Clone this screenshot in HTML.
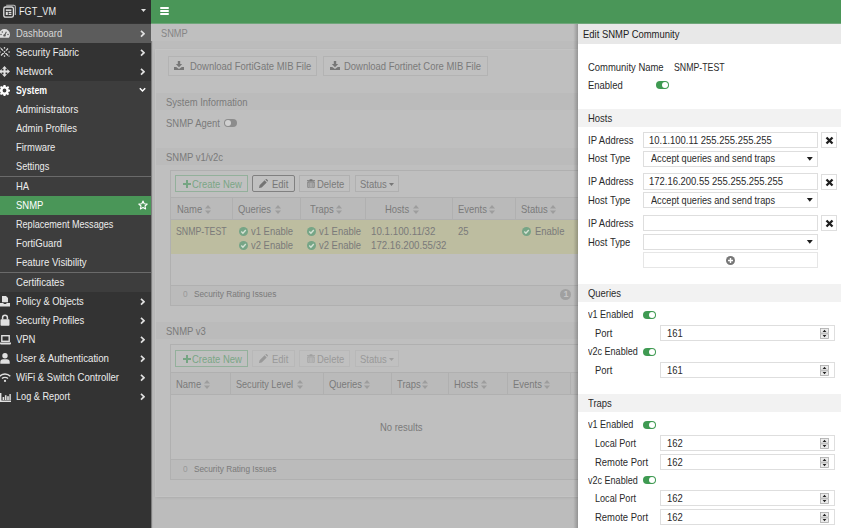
<!DOCTYPE html>
<html lang="en">
<head>
<meta charset="utf-8">
<title>FGT_VM - SNMP</title>
<style>
*{box-sizing:border-box;margin:0;padding:0}
html,body{width:841px;height:528px;overflow:hidden}
body{position:relative;background:#bcbcbc;font-family:"Liberation Sans",sans-serif;font-size:10.5px;color:#333}
.abs{position:absolute}
.t{position:absolute;white-space:nowrap;display:inline-block;transform-origin:0 50%;transform:scaleX(var(--s,.9));line-height:14px;height:14px;margin-top:-.5px}
/* sidebar */
#side{position:absolute;left:0;top:0;width:151px;height:528px;background:#333}
#side .hd{position:absolute;left:0;top:0;width:151px;height:23px;background:#2e2e2e}
#side .row{position:absolute;left:0;width:151px;height:19px;color:#ececec}
#side .row .t{left:16px;top:2.9px}
#side .row.up .t{top:2.7px}
#side .sub{background:#3d3d3d}
#side .sel{background:#4a9658;color:#fff}
#side .hov{background:#5c5c5c;color:#d6d6d6}
#side .sep{position:absolute;left:0;width:151px;height:1px;background:#6a6a6a}
#side svg{position:absolute}
/* top */
#top{position:absolute;left:151px;top:0;width:690px;height:24px;background:#4a9658;border-bottom:1px solid #6fa67a}
/* main dim */
#main{position:absolute;left:0;top:0;width:0;height:0;color:#7a7a7a}
#main .btn{position:absolute;border:1px solid #b3b3b3;background:#c0c0c0}
#main .sec{position:absolute;left:156px;width:430px;height:17px;background:#bbbbbb}
#main .tbl{position:absolute;border:1px solid #b0b0b0;background:#bfbfbf}
#main .tb{position:absolute;height:17px;border:1px solid #b0b0b0;background:#c0c0c0}
#main .tb.g{border-color:#93b09b}
#main .tb.d{border:1.5px solid #808080;border-radius:2px}
#main .tb.dis{border-color:#b8b8b8}
#main .t.g{color:#7ba686}
#main .t.s{font-size:9.2px}
#main .th{position:absolute;background:#bababa;border-top:1px solid #b0b0b0;border-bottom:1px solid #b0b0b0}
#main .vs{position:absolute;width:1px;background:#b0b0b0}
#main .ft{position:absolute;height:20px;background:#bbbbbb;border-top:1px solid #b0b0b0}

#panel{position:absolute;left:0;top:0;width:0;height:0;color:#2a2a2a}
#panel .ph{position:absolute;left:578px;width:263px;height:18px;background:#f2f2f2}
#panel .in{position:absolute;height:16px;border:1px solid #dedede;background:#fff}
#panel .tg{position:absolute;width:13px;height:8px;border-radius:4px;background:#3f9a52}
#panel .tg i{position:absolute;left:6px;top:1px;width:6px;height:6px;border-radius:3px;background:#fff}
#panel .xb{position:absolute;left:821px;width:16px;height:16px;border:1px solid #dedede;background:#fff}
#panel .sp{position:absolute;left:820px;width:9px;height:11px}
#panel .sp svg{display:block}
</style>
</head>
<body>
<div id="top">
  <div class="abs" style="left:9px;top:7px;width:9px;height:1.5px;background:#fff;border-radius:1px"></div>
  <div class="abs" style="left:9px;top:10px;width:9px;height:1.5px;background:#fff;border-radius:1px"></div>
  <div class="abs" style="left:9px;top:13.2px;width:9px;height:1.5px;background:#fff;border-radius:1px"></div>
</div>
<div id="side">
  <div class="hd"><span class="t" style="left:18.5px;top:4px;color:#eee;--s:.87">FGT_VM</span></div><svg style="left:2.5px;top:3.5px" width="13" height="14" viewBox="0 0 13 14"><path d="M3.2 1.2H10.8A1.5 1.5 0 0 1 12.3 2.7V11" fill="none" stroke="#bbb" stroke-width="1.1"/><rect x=".8" y="3" width="9.6" height="10.2" rx="1.8" fill="none" stroke="#e0e0e0" stroke-width="1.3"/><rect x="2.8" y="5.4" width="5.6" height="1.5" fill="#e0e0e0"/><rect x="2.8" y="7.8" width="2" height="3.2" fill="#e0e0e0"/><rect x="5.6" y="7.8" width="2.8" height="1.3" fill="#e0e0e0"/><rect x="5.6" y="9.7" width="2.8" height="1.3" fill="#e0e0e0"/></svg><svg style="left:141px;top:9px" width="5" height="3" viewBox="0 0 5 3"><path d="M0 0H5L2.5 3Z" fill="#e0e0e0"/></svg>
  <div class="row hov up" style="top:24px"><span class="t">Dashboard</span></div><svg style="left:-1px;top:29px" width="11" height="9" viewBox="0 0 11 9"><path d="M1.1 8.8A5.5 5.5 0 1 1 9.9 8.8Z" fill="#e0e0e0"/><path d="M5.5 6.6L7.4 2.8" stroke="#5c5c5c" stroke-width="1.1"/><circle cx="5.5" cy="6.4" r="1.2" fill="#5c5c5c"/><circle cx="2" cy="5.6" r=".75" fill="#5c5c5c"/><circle cx="3.3" cy="2.9" r=".75" fill="#5c5c5c"/><circle cx="9" cy="5.6" r=".75" fill="#5c5c5c"/></svg><svg style="left:140px;top:30px" width="5" height="8" viewBox="0 0 5 8"><path d="M1 .8L4 3.7L1 6.6" fill="none" stroke="#e0e0e0" stroke-width="1.7"/></svg>
  <div class="row up" style="top:43px"><span class="t">Security Fabric</span></div><svg style="left:-1px;top:47px" width="11" height="10" viewBox="0 0 11 10"><path d="M2 1.5L9 8.5M9 1.5L2 8.5" stroke="#e0e0e0" stroke-width="1.2" stroke-dasharray="3 1 10"/><circle cx="5.5" cy=".9" r=".8" fill="#e0e0e0"/><circle cx="5.5" cy="9.1" r=".8" fill="#e0e0e0"/><circle cx=".9" cy="5" r=".8" fill="#e0e0e0"/><circle cx="10.1" cy="5" r=".8" fill="#e0e0e0"/><circle cx="1" cy=".9" r=".7" fill="#e0e0e0"/><circle cx="10" cy="9.1" r=".7" fill="#e0e0e0"/></svg><svg style="left:140px;top:49px" width="5" height="8" viewBox="0 0 5 8"><path d="M1 .8L4 3.7L1 6.6" fill="none" stroke="#e0e0e0" stroke-width="1.7"/></svg>
  <div class="row" style="top:62px"><span class="t" style="--s:0.952">Network</span></div><svg style="left:-1px;top:66px" width="11" height="11" viewBox="0 0 11 11"><path d="M5.5 0L8 2.7H6.5V4.5H8.3V3L11 5.5L8.3 8V6.5H6.5V8.3H8L5.5 11L3 8.3H4.5V6.5H2.7V8L0 5.5L2.7 3V4.5H4.5V2.7H3Z" fill="#e0e0e0"/></svg><svg style="left:140px;top:68px" width="5" height="8" viewBox="0 0 5 8"><path d="M1 .8L4 3.7L1 6.6" fill="none" stroke="#e0e0e0" stroke-width="1.7"/></svg>
  <div class="row sub" style="top:81px;color:#fff;font-weight:bold"><span class="t" style="--s:0.83">System</span></div><svg style="left:-1px;top:85px" width="11" height="11" viewBox="0 0 11 11"><path fill="#fff" fill-rule="evenodd" d="M4.5 0H6.5L6.8 1.5L7.8 1.9L9 1L10.2 2.3L9.3 3.5L9.7 4.5L11 4.7V6.5L9.6 6.8L9.2 7.7L10.1 9L8.8 10.2L7.6 9.3L6.7 9.7L6.4 11H4.6L4.3 9.7L3.3 9.3L2.1 10.1L.9 8.8L1.7 7.7L1.3 6.7L0 6.4V4.6L1.4 4.3L1.8 3.3L.9 2.1L2.2 .9L3.4 1.7L4.3 1.3ZM5.5 3.6A1.9 1.9 0 1 0 5.5 7.4A1.9 1.9 0 1 0 5.5 3.6Z"/></svg><svg style="left:139px;top:87px" width="7" height="6" viewBox="0 0 7 6"><path d="M.8 1.2L3.5 4L6.2 1.2" fill="none" stroke="#fff" stroke-width="1.5"/></svg>
  <div class="row sub" style="top:100px"><span class="t" style="--s:0.928">Administrators</span></div>
  <div class="row sub" style="top:119px"><span class="t">Admin Profiles</span></div>
  <div class="row sub" style="top:138px"><span class="t">Firmware</span></div>
  <div class="row sub" style="top:157px"><span class="t" style="--s:0.876">Settings</span></div>
  <div class="sep" style="top:176px"></div>
  <div class="row sub" style="top:177px"><span class="t">HA</span></div>
  <div class="row sel" style="top:196px"><span class="t">SNMP</span></div><svg style="left:138px;top:200px" width="10" height="10" viewBox="0 0 10 10"><path d="M5 1L6.2 3.7L9.2 4L7 6L7.6 8.9L5 7.4L2.4 8.9L3 6L.8 4L3.8 3.7Z" fill="none" stroke="#fff" stroke-width="1.1" stroke-linejoin="round"/></svg>
  <div class="row sub" style="top:215px"><span class="t" style="--s:0.864">Replacement Messages</span></div>
  <div class="row sub" style="top:234px"><span class="t" style="--s:0.916">FortiGuard</span></div>
  <div class="row sub" style="top:253px"><span class="t" style="--s:0.92">Feature Visibility</span></div>
  <div class="sep" style="top:272px"></div>
  <div class="row sub" style="top:273px"><span class="t" style="--s:0.919">Certificates</span></div>
  <div class="row" style="top:292px"><span class="t" style="--s:0.886">Policy &amp; Objects</span></div><svg style="left:0px;top:296px" width="10" height="11" viewBox="0 0 10 11"><path d="M2 0H6L8 2V6.2H2Z" fill="#e0e0e0"/><path d="M0 7H3.2L4 8H6L6.8 7H10V10.5H0Z" fill="#e0e0e0"/></svg><svg style="left:140px;top:298px" width="5" height="8" viewBox="0 0 5 8"><path d="M1 .8L4 3.7L1 6.6" fill="none" stroke="#e0e0e0" stroke-width="1.7"/></svg>
  <div class="row" style="top:311px"><span class="t">Security Profiles</span></div><svg style="left:0px;top:314px" width="10" height="12" viewBox="0 0 10 12"><path d="M2.6 5.5V3.6A2.4 2.4 0 0 1 7.4 3.6V5.5" fill="none" stroke="#e0e0e0" stroke-width="1.5"/><rect x=".5" y="5.2" width="9" height="6.5" rx=".8" fill="#e0e0e0"/></svg><svg style="left:140px;top:317px" width="5" height="8" viewBox="0 0 5 8"><path d="M1 .8L4 3.7L1 6.6" fill="none" stroke="#e0e0e0" stroke-width="1.7"/></svg>
  <div class="row" style="top:330px"><span class="t">VPN</span></div><svg style="left:0px;top:335px" width="11" height="10" viewBox="0 0 11 10"><rect x="1.8" y=".7" width="7.4" height="5.6" fill="none" stroke="#e0e0e0" stroke-width="1.4"/><path d="M0 7.6H11V8.4Q11 9.4 10 9.4H1Q0 9.4 0 8.4Z" fill="#e0e0e0"/></svg><svg style="left:140px;top:336px" width="5" height="8" viewBox="0 0 5 8"><path d="M1 .8L4 3.7L1 6.6" fill="none" stroke="#e0e0e0" stroke-width="1.7"/></svg>
  <div class="row" style="top:349px"><span class="t" style="--s:0.921">User &amp; Authentication</span></div><svg style="left:0px;top:353px" width="10" height="11" viewBox="0 0 10 11"><circle cx="5" cy="2.8" r="2.7" fill="#e0e0e0"/><path d="M.3 10.8V9A2.8 2.8 0 0 1 3.1 6.3H6.9A2.8 2.8 0 0 1 9.7 9V10.8Z" fill="#e0e0e0"/></svg><svg style="left:140px;top:355px" width="5" height="8" viewBox="0 0 5 8"><path d="M1 .8L4 3.7L1 6.6" fill="none" stroke="#e0e0e0" stroke-width="1.7"/></svg>
  <div class="row" style="top:368px"><span class="t" style="--s:0.91">WiFi &amp; Switch Controller</span></div><svg style="left:-1px;top:373px" width="12" height="9" viewBox="0 0 12 9"><path d="M.7 3.3A7.2 7.2 0 0 1 11.3 3.3" fill="none" stroke="#e0e0e0" stroke-width="1.4"/><path d="M3 5.6A4.2 4.2 0 0 1 9 5.6" fill="none" stroke="#e0e0e0" stroke-width="1.4"/><circle cx="6" cy="7.9" r="1.1" fill="#e0e0e0"/></svg><svg style="left:140px;top:374px" width="5" height="8" viewBox="0 0 5 8"><path d="M1 .8L4 3.7L1 6.6" fill="none" stroke="#e0e0e0" stroke-width="1.7"/></svg>
  <div class="row" style="top:387px"><span class="t" style="--s:0.873">Log &amp; Report</span></div><svg style="left:0px;top:393px" width="11" height="9" viewBox="0 0 11 9"><path d="M.7 0V8.3H11" fill="none" stroke="#e0e0e0" stroke-width="1.4"/><rect x="2.6" y="4" width="1.6" height="3" fill="#e0e0e0"/><rect x="4.9" y="2.2" width="1.6" height="4.8" fill="#e0e0e0"/><rect x="7.2" y="3.2" width="1.6" height="3.8" fill="#e0e0e0"/><rect x="9.4" y="1" width="1.4" height="6" fill="#e0e0e0"/></svg><svg style="left:140px;top:393px" width="5" height="8" viewBox="0 0 5 8"><path d="M1 .8L4 3.7L1 6.6" fill="none" stroke="#e0e0e0" stroke-width="1.7"/></svg>
</div>

<div id="main">
  <div class="abs" style="left:151px;top:24px;width:1px;height:504px;background:#7d7d7d"></div><div class="abs" style="left:152px;top:24px;width:1px;height:504px;background:#b2b2b2"></div>
  <!-- page title bar -->
  <div class="abs" style="left:151px;top:24px;width:427px;height:17px;background:#bfbfbf"></div>
  <span class="t" style="left:161px;top:26px;color:#858585;--s:.88">SNMP</span>
  <!-- card -->
  <div class="abs" style="left:156px;top:50px;width:430px;height:446px;background:#bfbfbf;box-shadow:0 0 0 1px #c3c3c3,0 1px 3px rgba(0,0,0,.15)"></div>
  <!-- download buttons -->
  <div class="btn" style="left:168px;top:56px;width:149px;height:20px"></div>
  <span class="t" style="left:190px;top:59px">Download FortiGate MIB File</span>
  <div class="btn" style="left:323px;top:56px;width:165px;height:20px"></div>
  <span class="t" style="left:344px;top:59px">Download Fortinet Core MIB File</span>
  <!-- System Information -->
  <div class="sec" style="top:93px"></div>
  <span class="t" style="left:166px;top:95px">System Information</span>
  <span class="t" style="left:166px;top:116px">SNMP Agent</span>
  <div class="abs" style="left:224px;top:119px;width:13px;height:8px;border-radius:4px;background:#8c8c8c"></div>
  <div class="abs" style="left:225px;top:120px;width:6px;height:6px;border-radius:3px;background:#d0d0d0"></div>
  <!-- SNMP v1/v2c -->
  <div class="sec" style="top:148px"></div>
  <span class="t" style="left:166px;top:150px">SNMP v1/v2c</span>
  <div class="tbl" style="left:170px;top:170px;width:420px;height:136px"></div>
  <div class="tb g" style="left:175px;top:175px;width:73px"></div><span class="t g" style="left:192px;top:177px">Create New</span>
  <div class="tb d" style="left:252px;top:175px;width:43px"></div><span class="t" style="left:272px;top:177px;color:#777">Edit</span>
  <div class="tb" style="left:299px;top:175px;width:51px"></div><span class="t" style="left:317px;top:177px">Delete</span>
  <div class="tb" style="left:355px;top:175px;width:44px"></div><span class="t" style="left:360px;top:177px">Status</span>
  <div class="th" style="left:171px;top:197px;width:420px;height:23px"></div>
  <div class="vs" style="left:232px;top:197px;height:57px"></div>
  <div class="vs" style="left:300px;top:197px;height:57px"></div>
  <div class="vs" style="left:365px;top:197px;height:57px"></div>
  <div class="vs" style="left:452px;top:197px;height:57px"></div>
  <div class="vs" style="left:515px;top:197px;height:57px"></div>
  <div class="abs" style="left:171px;top:220px;width:420px;height:34px;background:#bdbda0"></div>
  <span class="t" style="left:177px;top:202px">Name</span>
  <span class="t" style="left:238px;top:202px">Queries</span>
  <span class="t" style="left:310px;top:202px">Traps</span>
  <span class="t" style="left:385px;top:202px">Hosts</span>
  <span class="t" style="left:458px;top:202px">Events</span>
  <span class="t" style="left:521px;top:202px">Status</span>
  <span class="t" style="left:176px;top:224px;--s:0.835">SNMP-TEST</span>
  <span class="t" style="left:251px;top:224px">v1 Enable</span>
  <span class="t" style="left:251px;top:238px">v2 Enable</span>
  <span class="t" style="left:319px;top:224px">v1 Enable</span>
  <span class="t" style="left:319px;top:238px">v2 Enable</span>
  <span class="t" style="left:371px;top:224px;--s:0.93">10.1.100.11/32</span>
  <span class="t" style="left:371px;top:238px;--s:0.923">172.16.200.55/32</span>
  <span class="t" style="left:458px;top:224px">25</span>
  <span class="t" style="left:535px;top:224px">Enable</span>
  <div class="ft" style="left:171px;top:285px;width:420px"></div>
  <span class="t s" style="left:183px;top:287px;color:#999">0</span>
  <span class="t s" style="left:194px;top:287px">Security Rating Issues</span>
  <!-- SNMP v3 -->
  <div class="sec" style="top:322px"></div>
  <span class="t" style="left:166px;top:324px">SNMP v3</span>
  <div class="tbl" style="left:170px;top:344px;width:420px;height:136px"></div>
  <div class="tb g" style="left:175px;top:350px;width:73px"></div><span class="t g" style="left:192px;top:352px">Create New</span>
  <div class="tb dis" style="left:252px;top:350px;width:43px"></div><span class="t" style="left:272px;top:352px;color:#999">Edit</span>
  <div class="tb dis" style="left:299px;top:350px;width:51px"></div><span class="t" style="left:317px;top:352px;color:#999">Delete</span>
  <div class="tb dis" style="left:355px;top:350px;width:44px"></div><span class="t" style="left:360px;top:352px;color:#999">Status</span>
  <div class="th" style="left:171px;top:372px;width:420px;height:23px"></div>
  <div class="vs" style="left:230px;top:372px;height:23px"></div>
  <div class="vs" style="left:323px;top:372px;height:23px"></div>
  <div class="vs" style="left:391px;top:372px;height:23px"></div>
  <div class="vs" style="left:448px;top:372px;height:23px"></div>
  <div class="vs" style="left:507px;top:372px;height:23px"></div>
  <div class="vs" style="left:570px;top:372px;height:23px"></div>
  <span class="t" style="left:176px;top:377px">Name</span>
  <span class="t" style="left:236px;top:377px;--s:0.865">Security Level</span>
  <span class="t" style="left:329px;top:377px">Queries</span>
  <span class="t" style="left:397px;top:377px">Traps</span>
  <span class="t" style="left:454px;top:377px">Hosts</span>
  <span class="t" style="left:513px;top:377px">Events</span>
  <span class="t" style="left:380px;top:420px">No results</span>
  <div class="ft" style="left:171px;top:459px;width:420px"></div>
  <span class="t s" style="left:183px;top:462px;color:#999">0</span>
  <span class="t s" style="left:194px;top:462px">Security Rating Issues</span>
  <!-- icons -->
  <svg class="abs" style="left:174px;top:61px" width="10" height="9" viewBox="0 0 10 9"><path d="M3.8 0H6.2V3H8.2L5 6.2L1.8 3H3.8Z" fill="#777"/><path d="M0 6H2.2L5 8L7.8 6H10V9H0Z" fill="#777"/></svg><svg class="abs" style="left:330px;top:61px" width="10" height="9" viewBox="0 0 10 9"><path d="M3.8 0H6.2V3H8.2L5 6.2L1.8 3H3.8Z" fill="#777"/><path d="M0 6H2.2L5 8L7.8 6H10V9H0Z" fill="#777"/></svg><svg class="abs" style="left:183px;top:180px" width="8" height="8" viewBox="0 0 8 8"><path d="M4 0V8M0 4H8" stroke="#76a583" stroke-width="2"/></svg><svg class="abs" style="left:259px;top:179px" width="9" height="9" viewBox="0 0 9 9"><path d="M0 9L.6 6.3L5.6 1.3L7.7 3.4L2.7 8.4Z M6.3 .6L7 0Q7.4 -.2 7.8 .2L8.8 1.2Q9.2 1.6 8.8 2L8.4 2.7Z" fill="#737373"/></svg><svg class="abs" style="left:307px;top:179px" width="8" height="9" viewBox="0 0 8 9"><path d="M0 1.2H2.6V.3H5.4V1.2H8V2.2H0Z" fill="#777"/><path d="M.9 3H7.1V8.2Q7.1 9 6.3 9H1.7Q.9 9 .9 8.2Z" fill="none" stroke="#777" stroke-width="1"/><path d="M2.9 3.8V8M5.1 3.8V8" stroke="#777" stroke-width=".8"/></svg><svg class="abs" style="left:389px;top:183px" width="5" height="3" viewBox="0 0 5 3"><path d="M0 0H5L2.5 3Z" fill="#777"/></svg><svg class="abs" style="left:183px;top:355px" width="8" height="8" viewBox="0 0 8 8"><path d="M4 0V8M0 4H8" stroke="#76a583" stroke-width="2"/></svg><svg class="abs" style="left:259px;top:354px" width="9" height="9" viewBox="0 0 9 9"><path d="M0 9L.6 6.3L5.6 1.3L7.7 3.4L2.7 8.4Z M6.3 .6L7 0Q7.4 -.2 7.8 .2L8.8 1.2Q9.2 1.6 8.8 2L8.4 2.7Z" fill="#999"/></svg><svg class="abs" style="left:307px;top:354px" width="8" height="9" viewBox="0 0 8 9"><path d="M0 1.2H2.6V.3H5.4V1.2H8V2.2H0Z" fill="#a0a0a0"/><path d="M.9 3H7.1V8.2Q7.1 9 6.3 9H1.7Q.9 9 .9 8.2Z" fill="none" stroke="#a0a0a0" stroke-width="1"/><path d="M2.9 3.8V8M5.1 3.8V8" stroke="#a0a0a0" stroke-width=".8"/></svg><svg class="abs" style="left:389px;top:358px" width="5" height="3" viewBox="0 0 5 3"><path d="M0 0H5L2.5 3Z" fill="#a0a0a0"/></svg><svg class="abs" style="left:205px;top:205px" width="6" height="9" viewBox="0 0 6 9"><path d="M0 3.6L3 0L6 3.6Z M0 5.4L3 9L6 5.4Z" fill="#9d9d9d"/></svg><svg class="abs" style="left:274.5px;top:205px" width="6" height="9" viewBox="0 0 6 9"><path d="M0 3.6L3 0L6 3.6Z M0 5.4L3 9L6 5.4Z" fill="#9d9d9d"/></svg><svg class="abs" style="left:336px;top:205px" width="6" height="9" viewBox="0 0 6 9"><path d="M0 3.6L3 0L6 3.6Z M0 5.4L3 9L6 5.4Z" fill="#9d9d9d"/></svg><svg class="abs" style="left:412.5px;top:205px" width="6" height="9" viewBox="0 0 6 9"><path d="M0 3.6L3 0L6 3.6Z M0 5.4L3 9L6 5.4Z" fill="#9d9d9d"/></svg><svg class="abs" style="left:489px;top:205px" width="6" height="9" viewBox="0 0 6 9"><path d="M0 3.6L3 0L6 3.6Z M0 5.4L3 9L6 5.4Z" fill="#9d9d9d"/></svg><svg class="abs" style="left:550px;top:205px" width="6" height="9" viewBox="0 0 6 9"><path d="M0 3.6L3 0L6 3.6Z M0 5.4L3 9L6 5.4Z" fill="#9d9d9d"/></svg><svg class="abs" style="left:204px;top:380px" width="6" height="9" viewBox="0 0 6 9"><path d="M0 3.6L3 0L6 3.6Z M0 5.4L3 9L6 5.4Z" fill="#9d9d9d"/></svg><svg class="abs" style="left:296.5px;top:380px" width="6" height="9" viewBox="0 0 6 9"><path d="M0 3.6L3 0L6 3.6Z M0 5.4L3 9L6 5.4Z" fill="#9d9d9d"/></svg><svg class="abs" style="left:364px;top:380px" width="6" height="9" viewBox="0 0 6 9"><path d="M0 3.6L3 0L6 3.6Z M0 5.4L3 9L6 5.4Z" fill="#9d9d9d"/></svg><svg class="abs" style="left:421.5px;top:380px" width="6" height="9" viewBox="0 0 6 9"><path d="M0 3.6L3 0L6 3.6Z M0 5.4L3 9L6 5.4Z" fill="#9d9d9d"/></svg><svg class="abs" style="left:481px;top:380px" width="6" height="9" viewBox="0 0 6 9"><path d="M0 3.6L3 0L6 3.6Z M0 5.4L3 9L6 5.4Z" fill="#9d9d9d"/></svg><svg class="abs" style="left:544px;top:380px" width="6" height="9" viewBox="0 0 6 9"><path d="M0 3.6L3 0L6 3.6Z M0 5.4L3 9L6 5.4Z" fill="#9d9d9d"/></svg><svg class="abs" style="left:239px;top:227px" width="9" height="9" viewBox="0 0 9 9"><circle cx="4.5" cy="4.5" r="4.5" fill="#76a586"/><path d="M2.3 4.6L3.9 6.2L6.8 3.1" fill="none" stroke="#d5e3d5" stroke-width="1.4"/></svg><svg class="abs" style="left:239px;top:241px" width="9" height="9" viewBox="0 0 9 9"><circle cx="4.5" cy="4.5" r="4.5" fill="#76a586"/><path d="M2.3 4.6L3.9 6.2L6.8 3.1" fill="none" stroke="#d5e3d5" stroke-width="1.4"/></svg><svg class="abs" style="left:307px;top:227px" width="9" height="9" viewBox="0 0 9 9"><circle cx="4.5" cy="4.5" r="4.5" fill="#76a586"/><path d="M2.3 4.6L3.9 6.2L6.8 3.1" fill="none" stroke="#d5e3d5" stroke-width="1.4"/></svg><svg class="abs" style="left:307px;top:241px" width="9" height="9" viewBox="0 0 9 9"><circle cx="4.5" cy="4.5" r="4.5" fill="#76a586"/><path d="M2.3 4.6L3.9 6.2L6.8 3.1" fill="none" stroke="#d5e3d5" stroke-width="1.4"/></svg><svg class="abs" style="left:522px;top:227px" width="9" height="9" viewBox="0 0 9 9"><circle cx="4.5" cy="4.5" r="4.5" fill="#76a586"/><path d="M2.3 4.6L3.9 6.2L6.8 3.1" fill="none" stroke="#d5e3d5" stroke-width="1.4"/></svg><div class="abs" style="left:560px;top:289px;width:11px;height:11px;border-radius:6px;background:#a0a0a0"></div><span class="t" style="left:563.5px;top:287.5px;color:#c4c4c4;font-weight:bold;font-size:9px;transform:none">1</span>
</div>

<div class="abs" style="left:570px;top:24px;width:8px;height:504px;background:linear-gradient(to right,rgba(0,0,0,0) 40%,rgba(0,0,0,.22))"></div>
<div id="panel">
<div class="abs" style="left:578px;top:24px;width:263px;height:504px;background:#fff"></div>
<div class="abs" style="left:578px;top:24px;width:263px;height:20px;background:#e8e8e8"></div>
<span class="t" style="left:583px;top:27px;color:#222">Edit SNMP Community</span>
<span class="t" style="left:588px;top:60px">Community Name</span>
<span class="t" style="left:674px;top:60px;--s:0.835">SNMP-TEST</span>
<span class="t" style="left:588px;top:78px">Enabled</span>
<div class="tg" style="left:656px;top:81px"><i></i></div>
<div class="ph" style="top:109px"></div><span class="t" style="left:588px;top:111px">Hosts</span>
<span class="t" style="left:588px;top:133px">IP Address</span>
<div class="in" style="left:643px;top:132px;width:175px"></div>
<span class="t" style="left:649px;top:133px">10.1.100.11 255.255.255.255</span>
<div class="xb" style="top:132px"><svg width="9" height="9" viewBox="0 0 9 9" style="position:absolute;left:3px;top:3px"><path d="M1.5 1.5L7.5 7.5M7.5 1.5L1.5 7.5" stroke="#1e1e1e" stroke-width="2.3"/></svg></div>
<span class="t" style="left:588px;top:151.5px">Host Type</span>
<div class="in" style="left:643px;top:151px;width:175px"></div>
<span class="t" style="left:651px;top:151.5px;--s:0.874">Accept queries and send traps</span>
<svg class="abs" style="left:806px;top:157px" width="7" height="4" viewBox="0 0 7 4"><path d="M.8 0H6.8L3.8 3.8Z" fill="#1e1e1e"/></svg>
<span class="t" style="left:588px;top:174.5px">IP Address</span>
<div class="in" style="left:643px;top:173px;width:175px;height:17px"></div>
<span class="t" style="left:649px;top:174.5px">172.16.200.55 255.255.255.255</span>
<div class="xb" style="top:174px"><svg width="9" height="9" viewBox="0 0 9 9" style="position:absolute;left:3px;top:3px"><path d="M1.5 1.5L7.5 7.5M7.5 1.5L1.5 7.5" stroke="#1e1e1e" stroke-width="2.3"/></svg></div>
<span class="t" style="left:588px;top:193px">Host Type</span>
<div class="in" style="left:643px;top:192px;width:175px"></div>
<span class="t" style="left:651px;top:193px;--s:0.874">Accept queries and send traps</span>
<svg class="abs" style="left:806px;top:198px" width="7" height="4" viewBox="0 0 7 4"><path d="M.8 0H6.8L3.8 3.8Z" fill="#1e1e1e"/></svg>
<span class="t" style="left:588px;top:216px">IP Address</span>
<div class="in" style="left:643px;top:215px;width:175px"></div>
<div class="xb" style="top:215px"><svg width="9" height="9" viewBox="0 0 9 9" style="position:absolute;left:3px;top:3px"><path d="M1.5 1.5L7.5 7.5M7.5 1.5L1.5 7.5" stroke="#1e1e1e" stroke-width="2.3"/></svg></div>
<span class="t" style="left:588px;top:235px">Host Type</span>
<div class="in" style="left:643px;top:234px;width:175px"></div>
<svg class="abs" style="left:806px;top:240px" width="7" height="4" viewBox="0 0 7 4"><path d="M.8 0H6.8L3.8 3.8Z" fill="#1e1e1e"/></svg>
<div class="in" style="left:643px;top:252px;width:175px;border-color:#e6e6e6"></div>
<svg class="abs" style="left:726px;top:256px" width="9" height="9" viewBox="0 0 9 9"><circle cx="4.5" cy="4.5" r="4.5" fill="#777"/><path d="M4.5 2V7M2 4.5H7" stroke="#fff" stroke-width="1.4"/></svg>
<div class="ph" style="top:284px"></div><span class="t" style="left:588px;top:286px">Queries</span>
<span class="t" style="left:588px;top:307px;--s:0.862">v1 Enabled</span><div class="tg" style="left:643px;top:311px"><i></i></div>
<span class="t" style="left:595px;top:326px">Port</span><div class="in" style="left:660px;top:325px;width:175px"></div><span class="t" style="left:667px;top:326.5px">161</span><div class="sp" style="top:328px"><svg width="9" height="11" viewBox="0 0 9 11"><rect x=".5" y=".5" width="8" height="4.6" fill="#ececec" stroke="#aaa" stroke-width=".8"/><rect x=".5" y="5.9" width="8" height="4.6" fill="#ececec" stroke="#aaa" stroke-width=".8"/><path d="M2.6 3.9L4.5 1.7L6.4 3.9Z M2.6 7.1L4.5 9.3L6.4 7.1Z" fill="#222"/></svg></div>
<span class="t" style="left:588px;top:344px;--s:0.86">v2c Enabled</span><div class="tg" style="left:643px;top:348px"><i></i></div>
<span class="t" style="left:595px;top:363px">Port</span><div class="in" style="left:660px;top:362px;width:175px"></div><span class="t" style="left:667px;top:363.5px">161</span><div class="sp" style="top:365px"><svg width="9" height="11" viewBox="0 0 9 11"><rect x=".5" y=".5" width="8" height="4.6" fill="#ececec" stroke="#aaa" stroke-width=".8"/><rect x=".5" y="5.9" width="8" height="4.6" fill="#ececec" stroke="#aaa" stroke-width=".8"/><path d="M2.6 3.9L4.5 1.7L6.4 3.9Z M2.6 7.1L4.5 9.3L6.4 7.1Z" fill="#222"/></svg></div>
<div class="ph" style="top:394px"></div><span class="t" style="left:588px;top:396px">Traps</span>
<span class="t" style="left:588px;top:417px;--s:0.862">v1 Enabled</span><div class="tg" style="left:643px;top:421px"><i></i></div>
<span class="t" style="left:595px;top:436px;--s:0.866">Local Port</span><div class="in" style="left:660px;top:435px;width:175px"></div><span class="t" style="left:667px;top:436.5px">162</span><div class="sp" style="top:438px"><svg width="9" height="11" viewBox="0 0 9 11"><rect x=".5" y=".5" width="8" height="4.6" fill="#ececec" stroke="#aaa" stroke-width=".8"/><rect x=".5" y="5.9" width="8" height="4.6" fill="#ececec" stroke="#aaa" stroke-width=".8"/><path d="M2.6 3.9L4.5 1.7L6.4 3.9Z M2.6 7.1L4.5 9.3L6.4 7.1Z" fill="#222"/></svg></div>
<span class="t" style="left:595px;top:455px">Remote Port</span><div class="in" style="left:660px;top:454px;width:175px"></div><span class="t" style="left:667px;top:455.5px">162</span><div class="sp" style="top:457px"><svg width="9" height="11" viewBox="0 0 9 11"><rect x=".5" y=".5" width="8" height="4.6" fill="#ececec" stroke="#aaa" stroke-width=".8"/><rect x=".5" y="5.9" width="8" height="4.6" fill="#ececec" stroke="#aaa" stroke-width=".8"/><path d="M2.6 3.9L4.5 1.7L6.4 3.9Z M2.6 7.1L4.5 9.3L6.4 7.1Z" fill="#222"/></svg></div>
<span class="t" style="left:588px;top:473px;--s:0.86">v2c Enabled</span><div class="tg" style="left:643px;top:476px"><i></i></div>
<span class="t" style="left:595px;top:491px;--s:0.866">Local Port</span><div class="in" style="left:660px;top:490px;width:175px"></div><span class="t" style="left:667px;top:491.5px">162</span><div class="sp" style="top:493px"><svg width="9" height="11" viewBox="0 0 9 11"><rect x=".5" y=".5" width="8" height="4.6" fill="#ececec" stroke="#aaa" stroke-width=".8"/><rect x=".5" y="5.9" width="8" height="4.6" fill="#ececec" stroke="#aaa" stroke-width=".8"/><path d="M2.6 3.9L4.5 1.7L6.4 3.9Z M2.6 7.1L4.5 9.3L6.4 7.1Z" fill="#222"/></svg></div>
<span class="t" style="left:595px;top:510px">Remote Port</span><div class="in" style="left:660px;top:509px;width:175px"></div><span class="t" style="left:667px;top:510.5px">162</span><div class="sp" style="top:512px"><svg width="9" height="11" viewBox="0 0 9 11"><rect x=".5" y=".5" width="8" height="4.6" fill="#ececec" stroke="#aaa" stroke-width=".8"/><rect x=".5" y="5.9" width="8" height="4.6" fill="#ececec" stroke="#aaa" stroke-width=".8"/><path d="M2.6 3.9L4.5 1.7L6.4 3.9Z M2.6 7.1L4.5 9.3L6.4 7.1Z" fill="#222"/></svg></div>
</div>
</body>
</html>
